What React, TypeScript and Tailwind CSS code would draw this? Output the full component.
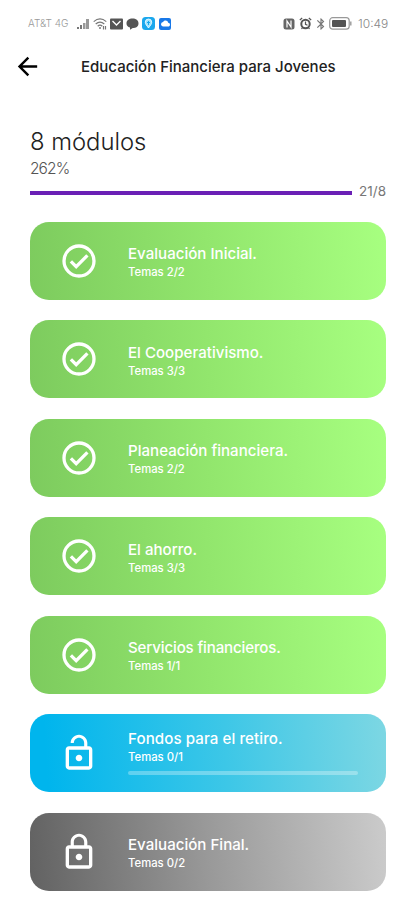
import { MdArrowBack, MdLockOpen, MdLockOutline, MdBluetooth, MdCloud } from "react-icons/md";

type Status = "done" | "open" | "locked";

const modules: { title: string; topics: string; status: Status; tracking: string }[] = [
  { title: "Evaluación Inicial.", topics: "Temas 2/2", status: "done", tracking: "" },
  { title: "El Cooperativismo.", topics: "Temas 3/3", status: "done", tracking: "" },
  { title: "Planeación financiera.", topics: "Temas 2/2", status: "done", tracking: "" },
  { title: "El ahorro.", topics: "Temas 3/3", status: "done", tracking: "" },
  { title: "Servicios financieros.", topics: "Temas 1/1", status: "done", tracking: "tracking-[-0.15px]" },
  { title: "Fondos para el retiro.", topics: "Temas 0/1", status: "open", tracking: "tracking-[0.08px]" },
  { title: "Evaluación Final.", topics: "Temas 0/2", status: "locked", tracking: "" },
];

const background: Record<Status, string> = {
  done: "bg-[linear-gradient(86deg,#7dcb5e_0%,#92e66d_50%,#a7ff80_100%)]",
  open: "bg-[linear-gradient(86deg,#00b5ed_5%,#3dc7e7_55%,#7dd7e3_100%)]",
  locked: "bg-[linear-gradient(86deg,#626262_0%,#999999_50%,#cbcbcb_100%)]",
};

function CheckIcon({ size }: { size: number }) {
  return (
    <svg width={size} height={size} viewBox="0 0 40 40" fill="none" stroke="currentColor" strokeWidth="3.3">
      <circle cx="20" cy="20" r="15" />
      <path d="M11.9 20.4l5.3 5.3 11.2-11.3" />
    </svg>
  );
}

const icons = { done: CheckIcon, open: MdLockOpen, locked: MdLockOutline };

function StatusBar() {
  return (
    <div className="flex h-[46px] items-center pt-[1px] pr-[27px] pl-[28px] text-[#8c8c8c]">
      <span className="w-[45px] text-[10px] font-light whitespace-nowrap text-[#999]">AT&amp;T 4G</span>
      <div className="ml-[4px] flex items-center gap-[3px]">
        <svg width="13" height="12" viewBox="0 0 13 12" fill="#777">
          <path d="M0 9h2v2H0zM3 7h2v4H3z" />
          <path d="M6 5h2.5v6H6zM9 1h3v10H9z" opacity=".75" />
        </svg>
        <svg width="14" height="12" viewBox="0 0 14 12" fill="none" stroke="#777" strokeWidth="1.2">
          <path d="M.7 3.6Q7-1.7 13.3 3.6M2.7 6Q7 2.2 11.3 6M4.7 8.2Q7 6 9.3 8.2" />
          <circle cx="7" cy="10" r="1" fill="#777" stroke="none" />
          <path d="M10.5 8v3.5M12.5 11.5V8" />
        </svg>
        <svg width="13" height="12" viewBox="0 0 13 12" fill="none">
          <rect y=".5" width="13" height="11" rx="1" fill="#555" />
          <path d="M2.5 3l4 4 4-4" stroke="white" strokeWidth="1.3" />
        </svg>
        <svg width="13" height="12" viewBox="0 0 13 12" fill="#555">
          <path d="M6.5.6c3.5 0 6 2 6 4.8s-2.5 4.7-5.7 4.7L4 11.8V9.6C1.8 8.9.5 7.4.5 5.4.5 2.6 3 .6 6.5.6z" />
        </svg>
        <svg width="13" height="13" viewBox="0 0 13 13">
          <rect width="13" height="13" rx="3.5" fill="#1aa7ed" />
          <path d="M6.5 11C4.8 8.5 3.3 7.3 3.3 5.2a3.2 3.2 0 0 1 6.4 0c0 2.1-1.5 3.3-3.2 5.8z" fill="#9de3ff" stroke="#fff" strokeWidth=".8" />
          <path d="M6.5 4v4M5 5.5h3" stroke="#1aa7ed" />
        </svg>
        <span className="ml-[1px] flex h-[12px] w-[12px] items-center justify-center rounded-[2px] bg-[#1878e8] text-white"><MdCloud size={9} /></span>
      </div>
      <div className="ml-auto flex items-center text-[#555]">
        <svg width="12" height="12" viewBox="0 0 12 12" fill="none">
          <rect x=".5" y=".5" width="11" height="11" rx="2.5" fill="#666" />
          <path d="M4 9.5V3l4 6V2.5" stroke="white" strokeWidth="1.2" />
        </svg>
        <svg width="13" height="13" viewBox="0 0 13 13" className="ml-[4px]" fill="none" stroke="#555">
          <circle cx="6.5" cy="7" r="4.2" strokeWidth="2" />
          <path d="M.8 3L3.2 1M12.2 3L9.8 1M2.5 12l1.5-2M10.5 12L9 10M6.5 4.5V7.3l2 1" strokeWidth="1.2" />
        </svg>
        <MdBluetooth size={14} className="ml-[2px] text-[#777]" />
        <svg width="23" height="13" viewBox="0 0 23 13" className="ml-[1px]" fill="none">
          <rect x=".7" y=".7" width="19.5" height="11.5" rx="3" stroke="#999" strokeWidth="1.2" />
          <rect x="3" y="3" width="14" height="7" rx="1" fill="#555" />
          <path d="M21.8 4.5v4" stroke="#999" strokeWidth="1.4" />
        </svg>
        <span className="ml-[6px] w-[30px] text-[12px] font-light whitespace-nowrap text-[#888]">10:49</span>
      </div>
    </div>
  );
}

export default function App() {
  return (
    <main className="h-[900px] w-[415px] overflow-hidden bg-white font-['Inter','Noto_Sans',sans-serif] whitespace-nowrap">
      <StatusBar />
      <header className="flex h-[40px] items-center pl-[13px]">
        <MdArrowBack size={29} className="text-black" />
        <h1 className="ml-[39px] pt-[2px] text-[15px] leading-[20px] font-medium text-[#222]">Educación Financiera para Jovenes</h1>
      </header>
      <section className="mt-[42px] pr-[29px] pl-[30px]">
        <h2 className="text-[23.8px] leading-[28px] font-light text-[#222]">8 módulos</h2>
        <p className="mt-[3px] text-[15.5px] leading-[20px] font-light tracking-[-0.9px] text-[#555]">262%</p>
        <div className="mt-[2px] flex h-[19px] items-center justify-between">
          <div className="mt-[5px] h-[4px] w-[322px] bg-[#6a20b5]" />
          <span className="pt-px text-[13.5px] text-[#777]">21/8</span>
        </div>
      </section>
      <section className="mt-[21.5px] flex flex-col gap-[20.5px] pr-[29px] pl-[30px]">
        {modules.map((m) => {
          const Icon = icons[m.status];
          const open = m.status === "open";
          return (
            <article key={m.title} className={`flex h-[78px] shrink-0 items-center rounded-[19px] pl-[29px] text-white ${background[m.status]}`}>
              <Icon size={40} />
              <div className={open ? "ml-[29px] pb-[3px]" : "ml-[29px] pt-[4px]"}>
                <h3 className={`text-[15.1px] leading-[20px] font-medium ${m.tracking}`}>{m.title}</h3>
                <p className="text-[11.3px] leading-[17px] font-medium">{m.topics}</p>
                {open && <div className="mt-[5px] h-[4px] w-[230px] rounded-full bg-white/30" />}
              </div>
            </article>
          );
        })}
      </section>
    </main>
  );
}
